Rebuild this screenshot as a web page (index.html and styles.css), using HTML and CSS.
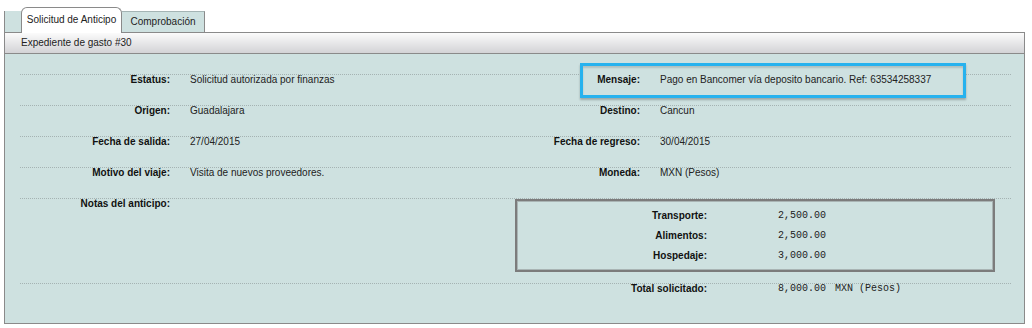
FILE: index.html
```html
<!DOCTYPE html>
<html lang="es">
<head>
    <meta charset="UTF-8">
    <title>Expediente de gasto #30</title>
    <link rel="stylesheet" href="styles.css">
</head>
<body>
    <div class="tabs">
        <div class="tab active">Solicitud de Anticipo</div>
        <div class="tab">Comprobación</div>
    </div>
    <div class="panel">
        <div class="panel-head">Expediente de gasto #30</div>
        <div class="panel-body">
            <div class="row">
                <span class="label">Estatus:</span>
                <span class="value">Solicitud autorizada por finanzas</span>
                <div class="pair highlight">
                    <span class="label">Mensaje:</span>
                    <span class="value">Pago en Bancomer vía deposito bancario. Ref: 63534258337</span>
                </div>
            </div>
            <div class="row">
                <span class="label">Origen:</span>
                <span class="value">Guadalajara</span>
                <div class="pair">
                    <span class="label">Destino:</span>
                    <span class="value">Cancun</span>
                </div>
            </div>
            <div class="row">
                <span class="label">Fecha de salida:</span>
                <span class="value">27/04/2015</span>
                <div class="pair">
                    <span class="label">Fecha de regreso:</span>
                    <span class="value">30/04/2015</span>
                </div>
            </div>
            <div class="row">
                <span class="label">Motivo del viaje:</span>
                <span class="value">Visita de nuevos proveedores.</span>
                <div class="pair">
                    <span class="label">Moneda:</span>
                    <span class="value">MXN (Pesos)</span>
                </div>
            </div>
            <div class="row notes">
                <span class="label">Notas del anticipo:</span>
                <span class="value"></span>
                <div class="amounts">
                    <span class="amount-label">Transporte:</span>
                    <span class="amount">2,500.00</span>
                    <span class="amount-label">Alimentos:</span>
                    <span class="amount">2,500.00</span>
                    <span class="amount-label">Hospedaje:</span>
                    <span class="amount">3,000.00</span>
                </div>
            </div>
            <div class="row total">
                <span class="amount-label">Total solicitado:</span>
                <span class="amount">8,000.00</span>
                <span class="currency">MXN (Pesos)</span>
            </div>
        </div>
    </div>
</body>
</html>
```

FILE: styles.css
```css
body {
    margin: 0;
    background-color: #fff;
    font-family: "Liberation Sans", Arial, sans-serif;
    font-size: 10px;
    color: #1a1a1a;
}
.tabs {
    display: flex;
    align-items: flex-end;
    width: fit-content;
    height: 21px;
    margin: 11px 0 0 4px;
    padding-left: 16px;
    background-color: #cee1e0;
    border-left: 1px solid #8a8a8a;
}
.tab {
    box-sizing: border-box;
    height: 21px;
    width: 83px;
    line-height: 19px;
    text-align: center;
    border-top: 1px solid #a4b4b4;
    border-right: 1px solid #8a8a8a;
    color: #222;
}
.tab.active {
    position: relative;
    z-index: 1;
    width: 101px;
    height: 26px;
    margin-bottom: -1px;
    line-height: 24px;
    background-color: #fff;
    border: 1px solid #8a8a8a;
    border-bottom: none;
    border-radius: 6px 6px 0 0;
}
.panel {
    width: 1019px;
    margin-left: 4px;
    border: 1px solid #8a8a8a;
}
.panel-head {
    height: 20px;
    line-height: 20px;
    padding-left: 16px;
    background: linear-gradient(to bottom, #fbfbfb, #d3d3d6);
    border-bottom: 1px solid #8a8a8a;
    color: #222;
}
.panel-body {
    padding: 20px 13px 29px 15px;
    background-color: #cee1e0;
}
.row {
    display: grid;
    grid-template-columns: 150px 310px 120px 1fr;
    column-gap: 20px;
    padding-bottom: 20px;
    line-height: 10px;
    border-top: 1px dotted #a5b3b3;
}
.label {
    position: relative;
    font-weight: bold;
    text-align: right;
    color: #111;
}
.value {
    position: relative;
    color: #222;
}
.pair {
    grid-column: 3 / 5;
    display: grid;
    grid-template-columns: 120px 1fr;
    column-gap: 20px;
    position: relative;
}
.highlight::before {
    content: '';
    position: absolute;
    box-sizing: border-box;
    left: 60px;
    right: 45px;
    top: -12px;
    height: 35px;
    background-color: #cee1e0;
    border: 3px solid #27b2ee;
    box-shadow: 0 2px 2px rgba(0,0,0,0.25), inset 0 2px 2px rgba(0,0,0,0.15);
}
.notes {
    padding-bottom: 11px;
}
.amounts {
    grid-column: 3 / 5;
    display: grid;
    grid-template-columns: 190px auto;
    column-gap: 71px;
    margin: 0 16px 0 -5px;
    padding: 5px 0 4px;
    line-height: 20px;
    border: 2px solid #7c7c7c;
    box-shadow: inset 0 0 0 1px #a9b4b4;
}
.amount-label {
    font-weight: bold;
    text-align: right;
    color: #111;
}
.amount, .currency {
    font-family: "Liberation Mono", "Courier New", monospace;
    font-size: 10px;
    color: #222;
}
.total {
    display: flex;
    column-gap: 0;
    padding-bottom: 0;
}
.total .amount-label {
    width: 687px;
}
.total .amount {
    margin-left: 71px;
}
.total .currency {
    margin-left: 9px;
}
```
